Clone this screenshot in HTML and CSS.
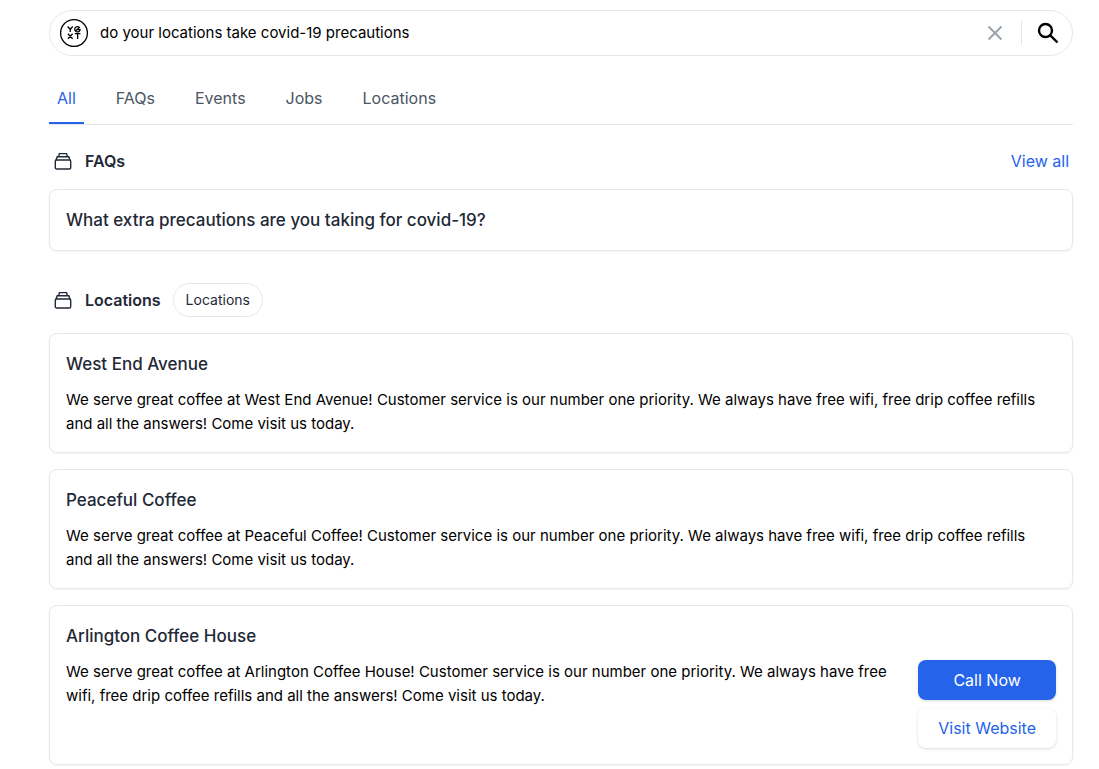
FILE: index.html
```
<!DOCTYPE html>
<html lang="en">
<head>
  <meta charset="UTF-8">
  <meta name="viewport" content="width=device-width, initial-scale=1.0">
  <title>Search</title>
  <link rel="stylesheet" href="styles.css">
</head>
<body>
  <main class="page">
    <!-- Search Bar -->
    <form class="search-bar" role="search">
      <svg class="logo" viewBox="0 0 28 28" aria-hidden="true">
        <circle cx="14" cy="14" r="13.4" />
        <path d="M7.700 7.500l2.500 3 2.500-3M10.200 10.500v2.500M7.900 14.700l4.700 5M12.600 14.700l-4.700 5M14.800 14.700h5.600M17.600 14.700v5.400" />
        <path d="M15.400 12l4-3.600a2.700 2.700 0 1 0 .7 2.300h-3" />
      </svg>
      <input class="search-input" type="text" aria-label="Conduct a search" value="do your locations take covid-19 precautions">
      <button class="icon-button clear-button" type="reset" aria-label="Clear the search bar">
        <svg viewBox="0 0 16 16" aria-hidden="true"><path d="M1.500 1.500l13 13M14.500 1.500l-13 13" /></svg>
      </button>
      <button class="icon-button submit-button" type="button" aria-label="Submit">
        <svg viewBox="0 0 22 22" aria-hidden="true"><circle cx="8.500" cy="8.500" r="6.500" /><path d="M13.300 13.300l7.200 7.200" /></svg>
      </button>
    </form>

    <!-- Vertical Tabs -->
    <nav class="tabs">
      <a class="tab active" href="#">All</a>
      <a class="tab" href="#">FAQs</a>
      <a class="tab" href="#">Events</a>
      <a class="tab" href="#">Jobs</a>
      <a class="tab" href="#">Locations</a>
    </nav>

    <!-- FAQs -->
    <section class="section">
      <div class="section-header">
        <svg class="section-icon" viewBox="0 0 18 18" aria-hidden="true">
          <rect x="1.300" y="8" width="15.400" height="9" rx="1.300" />
          <path d="M2 8.300l1.200-3.500h11.600l1.200 3.500M4.600 4.800l.8-3.200h7.200l.8 3.200" />
        </svg>
        <h2 class="section-title">FAQs</h2>
        <a class="view-all" href="#">View all</a>
      </div>
      <article class="card">
        <h3 class="card-title">What extra precautions are you taking for covid-19?</h3>
      </article>
    </section>

    <!-- Locations -->
    <section class="section">
      <div class="section-header">
        <svg class="section-icon" viewBox="0 0 18 18" aria-hidden="true">
          <rect x="1.300" y="8" width="15.400" height="9" rx="1.300" />
          <path d="M2 8.300l1.200-3.500h11.600l1.200 3.500M4.600 4.800l.8-3.200h7.200l.8 3.200" />
        </svg>
        <h2 class="section-title">Locations</h2>
        <span class="filter-pill">Locations</span>
      </div>
      <article class="card">
        <h3 class="card-title">West End Avenue</h3>
        <p class="card-text">We serve great coffee at West End Avenue! Customer service is our number one priority. We always have free wifi, free drip coffee refills and all the answers! Come visit us today.</p>
      </article>
      <article class="card">
        <h3 class="card-title">Peaceful Coffee</h3>
        <p class="card-text">We serve great coffee at Peaceful Coffee! Customer service is our number one priority. We always have free wifi, free drip coffee refills and all the answers! Come visit us today.</p>
      </article>
      <article class="card">
        <h3 class="card-title">Arlington Coffee House</h3>
        <div class="card-body">
          <p class="card-text">We serve great coffee at Arlington Coffee House! Customer service is our number one priority. We always have free wifi, free drip coffee refills and all the answers! Come visit us today.</p>
          <div class="card-actions">
            <button class="button primary" type="button">Call Now</button>
            <button class="button" type="button">Visit Website</button>
          </div>
        </div>
      </article>
    </section>
  </main>
</body>
</html>
```
FILE: styles.css
```
:root {
  --primary-color: #2563eb;
  --text-color: #1f2937;
  --muted-color: #4b5563;
  --border-color: #e5e7eb;
}

* {
  box-sizing: border-box;
}

body {
  margin: 0;
  background-color: #fff;
  color: #000;
  font-family: Inter, "Liberation Sans", sans-serif;
  font-size: 16px;
  line-height: 24px;
}

h2, h3, p {
  margin: 0;
}

a {
  text-decoration: none;
}

button, input {
  font: inherit;
}

svg {
  fill: none;
  stroke: currentColor;
}

.page {
  padding: 10px 26px 4px 49px;
}

.search-bar {
  display: flex;
  align-items: center;
  height: 46px;
  padding: 0 13px 0 10px;
  border: 1px solid var(--border-color);
  border-radius: 23px;
}

.logo {
  width: 28px;
  height: 28px;
  margin-right: 12px;
  stroke-width: 1.3;
}

.search-input {
  flex: 1;
  min-width: 0;
  padding: 0;
  border: none;
  outline: none;
  color: #000;
  font-size: 15px;
}

.icon-button {
  display: flex;
  padding: 0;
  border: none;
  background: none;
  cursor: pointer;
}

.clear-button {
  padding: 4px 18px 4px 0;
  border-right: 1px solid var(--border-color);
  color: #9ca3af;
}

.clear-button svg {
  width: 16px;
  height: 16px;
  stroke-width: 2;
}

.submit-button {
  padding-left: 15px;
  color: #000;
}

.submit-button svg {
  width: 22px;
  height: 22px;
  stroke-width: 2.4;
}

.tabs {
  display: flex;
  gap: 24px;
  margin-top: 16px;
  border-bottom: 1px solid var(--border-color);
}

.tab {
  padding: 14px 8px 12px;
  border-bottom: 2px solid transparent;
  color: var(--muted-color);
}

.tab.active {
  border-color: var(--primary-color);
  color: var(--primary-color);
}

.section {
  margin-bottom: 32px;
}

.section:last-child {
  margin-bottom: 0;
}

.section-header {
  display: flex;
  align-items: center;
  min-height: 34px;
  padding: 0 4px 0 5px;
  margin-bottom: 16px;
}

.tabs + .section .section-header {
  margin: 19px 0 11px;
}

.section-icon {
  width: 18px;
  height: 18px;
  margin-right: 13px;
  color: var(--text-color);
  stroke-width: 1.4;
}

.section-title {
  color: var(--text-color);
  font-size: 16px;
  font-weight: 600;
}

.view-all {
  margin-left: auto;
  color: var(--primary-color);
}

.filter-pill {
  margin-left: 12px;
  padding: 6px 12px;
  border: 1px solid var(--border-color);
  border-radius: 17px;
  color: var(--text-color);
  font-size: 14px;
  line-height: 20px;
}

.card {
  padding: 16px;
  border: 1px solid var(--border-color);
  border-radius: 8px;
  box-shadow: 0 1px 2px rgba(0, 0, 0, 0.05);
}

.card + .card {
  margin-top: 16px;
}

.card-title {
  color: var(--text-color);
  font-size: 17px;
  font-weight: 500;
  line-height: 28px;
}

.card-title + * {
  margin-top: 10px;
}

.card-text {
  padding-right: 4px;
  font-size: 15px;
}

.card-body {
  display: flex;
}

.card-body .card-text {
  flex: 1;
}

.card-actions {
  display: flex;
  flex-direction: column;
  gap: 8px;
  margin-left: 12px;
}

.button {
  height: 40px;
  padding: 0 20px;
  border: none;
  border-radius: 8px;
  background-color: #fff;
  box-shadow: 0 1px 3px rgba(0, 0, 0, 0.15);
  color: var(--primary-color);
  cursor: pointer;
}

.button.primary {
  background-color: var(--primary-color);
  color: #fff;
}
```
